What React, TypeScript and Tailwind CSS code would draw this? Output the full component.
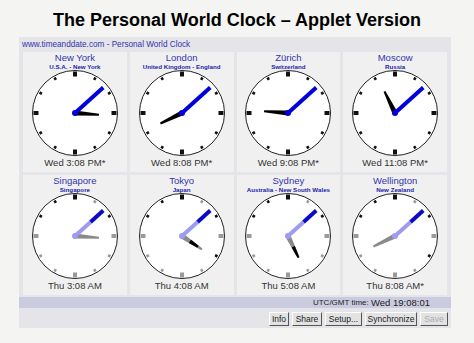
const clocks = [
  { city: 'New York', country: 'U.S.A. - New York', h: 3, m: 8, time: 'Wed 3:08 PM*', night: false },
  { city: 'London', country: 'United Kingdom - England', h: 8, m: 8, time: 'Wed 8:08 PM*', night: false },
  { city: 'Zürich', country: 'Switzerland', h: 9, m: 8, time: 'Wed 9:08 PM*', night: false },
  { city: 'Moscow', country: 'Russia', h: 11, m: 8, time: 'Wed 11:08 PM*', night: false },
  { city: 'Singapore', country: 'Singapore', h: 3, m: 8, time: 'Thu 3:08 AM', night: true, dark: [0, 2, 10, 11] },
  { city: 'Tokyo', country: 'Japan', h: 4, m: 8, time: 'Thu 4:08 AM', night: true, dark: [0, 2, 4, 10, 11], band: [0.4, 0.8] },
  { city: 'Sydney', country: 'Australia - New South Wales', h: 5, m: 8, time: 'Thu 5:08 AM', night: true, dark: [0, 2, 10, 11], band: [0.5, 1] },
  { city: 'Wellington', country: 'New Zealand', h: 8, m: 8, time: 'Thu 8:08 AM*', night: true, dark: [0, 2, 4, 10, 11] },
];

const buttons = [
  { label: 'Info', w: 'w-[20px]' },
  { label: 'Share', w: 'w-[30px]' },
  { label: 'Setup...', w: 'w-[37px]' },
  { label: 'Synchronize', w: 'w-[52px]' },
  { label: 'Save', w: 'w-[28px]', off: true },
];

type ClockProps = { h: number; m: number; night: boolean; dark?: number[]; band?: number[] };

function Clock({ h, m, night, dark, band }: ClockProps) {
  const c = 43;
  const ha = (h % 12) * 30 + m * 0.5;
  const ma = m * 6;
  const len = 24;
  // hand width at a given distance from the centre (wedge shape)
  const hw = (f: number) => 2.6 - 1.6 * f;
  const seg = (f1: number, f2: number) =>
    `${c - hw(f1)},${c - len * f1} ${c - hw(f2)},${c - len * f2} ${c + hw(f2)},${c - len * f2} ${c + hw(f1)},${c - len * f1}`;

  return (
    <svg width="86" height="86" viewBox="0 0 86 86">
      <circle cx={c} cy={c} r="42.5" fill="#fff" stroke="#222" strokeWidth="1" />
      {Array.from({ length: 12 }).map((_, i) => {
        const col = !night || dark?.includes(i) ? '#111' : '#9a9a9a';
        return i % 3 === 0 ? (
          <rect key={i} x={c - 2} y={c - 41.5} width="4" height="5" fill={col} transform={`rotate(${i * 30} ${c} ${c})`} />
        ) : (
          <rect key={i} x={c - 1.3} y={c - 41} width="2.6" height="2.8" fill={col} transform={`rotate(${i * 30} ${c} ${c})`} />
        );
      })}
      <g transform={`rotate(${ha} ${c} ${c})`}>
        <polygon points={seg(0, 1)} fill={night ? '#8a8a8a' : '#000'} />
        {band && <polygon points={seg(band[0], band[1])} fill="#000" />}
      </g>
      <g transform={`rotate(${ma} ${c} ${c})`}>
        {night ? (
          <>
            <rect x={c - 2} y={c - 21} width="4" height="21" fill="#9c9cf2" />
            <rect x={c - 2} y={c - 38} width="4" height="17" fill="#0a0ac8" />
          </>
        ) : (
          <rect x={c - 2} y={c - 38} width="4" height="38" fill="#0000dd" />
        )}
      </g>
      <circle cx={c} cy={c} r="3" fill={night ? '#9c9cf2' : '#0000dd'} />
    </svg>
  );
}

export default function App() {
  return (
    <div className="w-[474px] h-[343px] bg-[#f4f5f2] font-['Liberation_Sans',Arial,sans-serif] overflow-hidden">
      <h1 className="pt-[10px] text-center text-[18px] leading-[20px] font-bold text-black">
        The Personal World Clock – Applet Version
      </h1>

      <div className="mt-[7px] ml-[19px] w-[432px] bg-[#e5e5e9]">
        <div className="h-[15px] pl-[3px] text-[8.2px] leading-[15px] text-[#3333aa]">
          www.timeanddate.com - Personal World Clock
        </div>

        <div className="grid grid-cols-4 gap-[3px] px-[4px]">
          {clocks.map((c) => (
            <div key={c.city} className="h-[120px] bg-[#f0f0f1] flex flex-col items-center pt-[1px]">
              <span className="text-[9.5px] leading-[10px] text-[#3333aa]">{c.city}</span>
              <span className="text-[6.2px] leading-[7px] font-bold text-[#2222aa] whitespace-nowrap">{c.country}</span>
              <Clock h={c.h} m={c.m} night={c.night} dark={c.dark} band={c.band} />
              <span className="mt-[1px] text-[9.5px] leading-[12px] text-[#333]">{c.time}</span>
            </div>
          ))}
        </div>

        <div className="mt-[2px] h-[11px] bg-[#cbcbe0] flex items-center justify-end pr-[21px] text-[#222]">
          <span className="text-[8px] leading-[11px]">UTC/GMT time:&nbsp;</span>
          <span className="text-[9.5px] leading-[11px]">Wed 19:08:01</span>
        </div>

        <div className="flex justify-end gap-[3px] pt-[4px] pb-[2px] pr-[3px]">
          {buttons.map((b) => (
            <div
              key={b.label}
              className={`${b.w} h-[14px] flex items-center justify-center bg-[#e2e2e2] border border-t-white border-l-white border-r-[#555] border-b-[#555] text-[8.5px] leading-none whitespace-nowrap ${b.off ? 'text-[#aaa]' : 'text-[#222]'}`}
            >
              {b.label}
            </div>
          ))}
        </div>
      </div>
    </div>
  );
}
